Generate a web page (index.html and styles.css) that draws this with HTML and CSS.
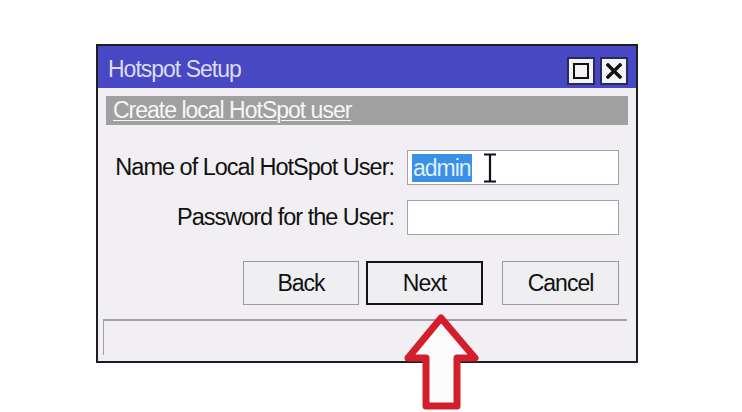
FILE: index.html
```html
<!DOCTYPE html>
<html lang="en">
<head>
    <meta charset="UTF-8">
    <meta name="viewport" content="width=device-width, initial-scale=1.0">
    <title>Hotspot Setup</title>
    <link rel="stylesheet" href="styles.css">
</head>
<body>
    <div class="window">
        <div class="title-bar">
            <span class="title">Hotspot Setup</span>
            <div class="title-buttons">
                <span class="title-btn"><span class="max-box"></span></span>
                <span class="title-btn">
                    <svg width="16" height="16" viewBox="0 0 16 16">
                        <path d="M2 2 L14 14 M14 2 L2 14" stroke="#111" stroke-width="3.4" stroke-linecap="square"/>
                    </svg>
                </span>
            </div>
        </div>

        <div class="section-head">Create local HotSpot user</div>

        <div class="fields">
            <label class="field-label">Name of Local HotSpot User:</label>
            <div class="field-input">
                <span class="selected">admin</span>
                <svg class="ibeam" width="14" height="30" viewBox="0 0 14 30">
                    <path d="M1 1.5 H13 M1 28.5 H13 M7 1.5 V28.5" stroke="#111" stroke-width="2.2" fill="none"/>
                </svg>
            </div>

            <label class="field-label">Password for the User:</label>
            <div class="field-input"></div>
        </div>

        <div class="actions">
            <button type="button" class="btn">Back</button>
            <button type="button" class="btn btn-default">Next</button>
            <button type="button" class="btn btn-cancel">Cancel</button>
        </div>

        <div class="status-bar"></div>
    </div>

    <!-- red pointer drawn over the dialog -->
    <svg class="pointer" width="90" height="100" viewBox="0 0 90 100">
        <path d="M45 6 L79 46 L61 46 L61 94 L30 94 L30 46 L12 46 Z"
              fill="#fdfcfd" stroke="#d21f2b" stroke-width="7" stroke-linejoin="round"/>
    </svg>
</body>
</html>
```

FILE: styles.css
```css
/* Page */
body {
    margin: 0;
    background-color: #fff;
    font-family: "Liberation Sans", Arial, sans-serif;
    font-size: 23px;
    letter-spacing: -1px;
    color: #111;
    position: relative;
    height: 412px;
    overflow: hidden;
}

/* Dialog Window */
.window {
    width: 542px;
    margin: 44px 0 0 96px;
    border: 2px solid #1e1e22;
    background-color: #f1eff3;
    box-sizing: border-box;
}

/* Title Bar */
.title-bar {
    display: flex;
    align-items: center;
    justify-content: space-between;
    height: 42px;
    padding: 5px 8px 0 10px;
    box-sizing: border-box;
    background-color: #4848c4;
}

.title {
    color: #dcdcf4;
    font-size: 23px;
}

.title-buttons {
    display: flex;
    gap: 5px;
    margin-top: 3px;
}

.title-btn {
    width: 28px;
    height: 28px;
    display: flex;
    align-items: center;
    justify-content: center;
    background-color: #f4f4f6;
    border: 2px solid #2a2a5a;
    box-sizing: border-box;
}

.max-box {
    width: 16px;
    height: 16px;
    border: 2px solid #111;
    box-sizing: border-box;
}

/* Section Heading */
.section-head {
    margin: 8px 8px 0 8px;
    height: 29px;
    line-height: 29px;
    padding-left: 7px;
    background-color: #a0a0a0;
    color: #f6f6f6;
    text-decoration: underline;
    text-decoration-thickness: 1px;
    text-underline-offset: 2px;
}

/* Fields */
.fields {
    display: grid;
    grid-template-columns: 1fr 212px;
    column-gap: 13px;
    row-gap: 15px;
    align-items: center;
    padding: 25px 17px 0 8px;
}

.field-label {
    text-align: right;
    font-size: 23.5px;
}

.field-input {
    height: 35px;
    display: flex;
    align-items: center;
    padding-left: 4px;
    background-color: #fff;
    border: 1px solid #a4a4a8;
    box-sizing: border-box;
}

.selected {
    background-color: #3a8fe6;
    color: #dff0ff;
    height: 28px;
    line-height: 28px;
    padding: 0 1px;
}

.ibeam {
    margin-left: 11px;
}

/* Buttons */
.actions {
    display: flex;
    justify-content: flex-end;
    padding: 26px 17px 0 0;
}

.btn {
    width: 117px;
    height: 44px;
    font-family: inherit;
    font-size: 23px;
    letter-spacing: -1px;
    color: #111;
    background-color: #efeef1;
    border: 1px solid #9a9a9e;
    padding: 0;
}

.btn:first-child {
    width: 116px;
}

.btn-default {
    margin-left: 7px;
    border: 2px solid #141414;
}

.btn-cancel {
    margin-left: 19px;
}

/* Status Bar */
.status-bar {
    height: 36px;
    margin: 14px 9px 6px 5px;
    border-top: 2px solid #a2a2a6;
    border-left: 1px solid #a2a2a6;
    box-sizing: border-box;
}

/* Red Pointer */
.pointer {
    position: absolute;
    left: 396px;
    top: 312px;
}
```
